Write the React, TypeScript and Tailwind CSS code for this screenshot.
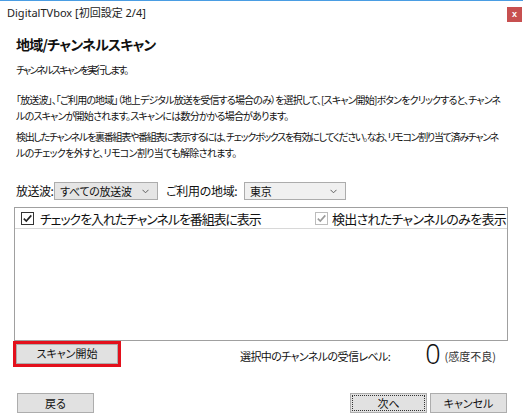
import React from "react";

const font = "font-['Noto_Sans_CJK_JP','Noto_Sans_CJK_SC',sans-serif] [font-feature-settings:'palt']";

function Chevron() {
  return (
    <svg width="7" height="5" viewBox="0 0 7 5" className="shrink-0">
      <path d="M0.5 0.8 L3.5 3.8 L6.5 0.8" fill="none" stroke="#606060" strokeWidth="1" />
    </svg>
  );
}

function Combo({ value, width, bg }: { value: string; width: string; bg: string }) {
  return (
    <div className={`${width} ${bg} h-[18px] border border-[#acacac] flex items-center justify-between pl-[5px] pr-[8px]`}>
      <span className="text-[11px] leading-none text-[#111] whitespace-nowrap tracking-[-0.3px]">{value}</span>
      <Chevron />
    </div>
  );
}

function CheckBox({ disabled }: { disabled?: boolean }) {
  const border = disabled ? "border-[#bcbcbc]" : "border-[#333333]";
  const stroke = disabled ? "#9a9a9a" : "#222222";
  return (
    <div className={`w-[13px] h-[13px] border ${border} bg-white flex items-center justify-center shrink-0`}>
      <svg width="11" height="11" viewBox="0 0 11 11">
        <path d="M1.8 5.6 L4.3 8.1 L9.3 2.4" fill="none" stroke={stroke} strokeWidth="1.6" />
      </svg>
    </div>
  );
}

function Btn({ label, focused }: { label: string; focused?: boolean }) {
  return (
    <div className="w-[77px] h-[20px] bg-[#e1e1e1] border border-[#adadad] flex items-center justify-center p-[1px]">
      <div
        className={`w-full h-full flex items-center justify-center text-[11px] leading-none text-[#111] ${
          focused ? "border border-dotted border-[#333]" : ""
        }`}
      >
        {label}
      </div>
    </div>
  );
}

export default function App() {
  return (
    <div className={`${font} w-[523px] h-[420px] bg-white border-t border-[#4a9de3] text-[#111] overflow-hidden flex flex-col`}>
      {/* title bar */}
      <div className="h-[23px] flex items-center justify-between pl-[7px] pr-[1px]">
        <span className="text-[11px] leading-none text-[#222] [font-feature-settings:normal] font-['Noto_Sans','Noto_Sans_CJK_JP',sans-serif]">
          DigitalTVbox [初回設定 2/4]
        </span>
        <div className="w-[15px] h-[15px] mt-[4px] bg-[#c75050] flex items-center justify-center">
          <span className="text-white text-[9px] font-bold leading-none font-['Liberation_Sans',sans-serif]">x</span>
        </div>
      </div>

      <div className="px-[16px] flex flex-col">
        <h1 className="mt-[10px] text-[14px] leading-[20px] font-bold tracking-[-0.8px] text-[#111]">地域/チャンネルスキャン</h1>

        <p className="mt-[8px] text-[10px] leading-[16px] whitespace-nowrap tracking-[-1.8px]">チャンネルスキャンを実行します。</p>

        <div className="mt-[14px] text-[10px] leading-[16px] whitespace-nowrap">
          <p className="tracking-[-0.85px]">
            「放送波」、「ご利用の地域」（地上デジタル放送を受信する場合のみ）を選択して、[スキャン開始]ボタンをクリックすると、チャンネ
          </p>
          <p className="tracking-[-0.8px]">ルのスキャンが開始されます。スキャンには数分かかる場合があります。</p>
        </div>

        <div className="mt-[5px] text-[10px] leading-[16px] whitespace-nowrap">
          <p className="tracking-[-1.3px]">
            検出したチャンネルを裏番組表や番組表に表示するには、チェックボックスを有効にしてください。なお、リモコン割り当て済みチャンネ
          </p>
          <p className="tracking-[-0.67px]">ルのチェックを外すと、リモコン割り当ても解除されます。</p>
        </div>

        {/* broadcast / region selectors */}
        <div className="mt-[21px] flex items-center h-[18px]">
          <span className="text-[12px] leading-none w-[38px] whitespace-nowrap tracking-[-0.5px]">放送波:</span>
          <Combo value="すべての放送波" width="w-[104px]" bg="bg-[#e5e5e5]" />
          <span className="ml-[8px] text-[12px] leading-none w-[78px] whitespace-nowrap tracking-[-0.3px]">ご利用の地域:</span>
          <Combo value="東京" width="w-[102px]" bg="bg-[#f0f0f0]" />
        </div>
      </div>

      {/* channel list */}
      <div className="mt-[7px] ml-[14px] w-[494px] h-[134px] border border-[#a0a0a0] flex flex-col">
        <div className="h-[21px] border-b border-[#d8d8d8] flex items-center justify-between pl-[6px] pr-[1px]">
          <div className="flex items-center gap-[6px]">
            <CheckBox />
            <span className="text-[13px] leading-none tracking-[-1.1px] whitespace-nowrap">チェックを入れたチャンネルを番組表に表示</span>
          </div>
          <div className="flex items-center gap-[4px]">
            <CheckBox disabled />
            <span className="text-[13px] leading-none tracking-[-0.7px] whitespace-nowrap">検出されたチャンネルのみを表示</span>
          </div>
        </div>
        <div className="flex-1 bg-white" />
      </div>

      {/* scan button and reception level */}
      <div className="mt-[-1px] flex items-center">
        <div className="ml-[13px] w-[108px] h-[26px] border-[3px] border-[#e3101c] flex items-stretch">
          <div className="flex-1 bg-[#e1e1e1] border border-[#adadad] flex items-center justify-center text-[11px] leading-none">
            スキャン開始
          </div>
        </div>
        <span className="ml-[119px] mt-[6px] text-[11px] leading-none tracking-[-0.6px] whitespace-nowrap">選択中のチャンネルの受信レベル:</span>
        <span className="ml-[35px] text-[27px] leading-none font-['Noto_Sans',sans-serif] font-light">0</span>
        <span className="ml-[4px] mt-[6px] text-[11px] leading-none text-[#333] whitespace-nowrap">(感度不良)</span>
      </div>

      {/* navigation buttons */}
      <div className="mt-[26px] flex items-center pl-[17px] pr-[16px]">
        <Btn label="戻る" />
        <div className="flex-1" />
        <Btn label="次へ" focused />
        <div className="w-[3px]" />
        <Btn label="キャンセル" />
      </div>
    </div>
  );
}
